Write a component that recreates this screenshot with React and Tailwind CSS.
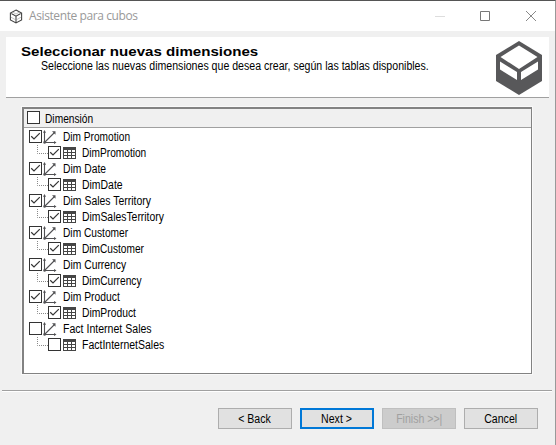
import React from "react";

const dimensions = [
  { name: "Dim Promotion", fit: "scale-x-[0.845]", table: "DimPromotion", tableFit: "scale-x-[0.845]", checked: true },
  { name: "Dim Date", fit: "scale-x-[0.86]", table: "DimDate", tableFit: "scale-x-[0.87]", checked: true },
  { name: "Dim Sales Territory", fit: "scale-x-[0.87]", table: "DimSalesTerritory", tableFit: "scale-x-[0.865]", checked: true },
  { name: "Dim Customer", fit: "scale-x-[0.85]", table: "DimCustomer", tableFit: "scale-x-[0.845]", checked: true },
  { name: "Dim Currency", fit: "scale-x-[0.86]", table: "DimCurrency", tableFit: "scale-x-[0.85]", checked: true },
  { name: "Dim Product", fit: "scale-x-[0.86]", table: "DimProduct", tableFit: "scale-x-[0.86]", checked: true },
  { name: "Fact Internet Sales", fit: "scale-x-[0.88]", table: "FactInternetSales", tableFit: "scale-x-[0.875]", checked: false },
];

function CheckBox({ checked }) {
  return (
    <svg className="mb-px block h-[13px] w-[13px] shrink-0" viewBox="0 0 13 13">
      <rect x="0.5" y="0.5" width="12" height="12" fill="#fff" stroke="#333" />
      {checked && <path d="M2.2 6.3 5 9 10.8 3.2" fill="none" stroke="#333" strokeWidth="1.2" />}
    </svg>
  );
}

function AxisIcon() {
  return (
    <svg className="ml-px block h-[14px] w-[14px] shrink-0" viewBox="0 0 14 14" fill="none" stroke="#505053">
      <path d="M1.5 2v10.5H12M2 12 11.5 2.5" strokeWidth="1.1" />
      <path d="M0 2.8 1.5 0 3 2.8ZM9 1.2h3.5v3.5ZM11 11l2.5 1.5L11 14Z" fill="#505053" stroke="none" />
      <circle cx="1.6" cy="12.4" r="1.3" fill="#505053" stroke="none" />
    </svg>
  );
}

function TableIcon() {
  return (
    <svg className="ml-[2px] block h-[12px] w-[13px] shrink-0" viewBox="0 0 13 12">
      <path d="M0 0h13v12H0Z" fill="#454545" />
      <path d="M1 3h3v2H1Zm4 0h3v2H5Zm4 0h3v2H9ZM1 6h3v2H1Zm4 0h3v2H5Zm4 0h3v2H9ZM1 9h3v2H1Zm4 0h3v2H5Zm4 0h3v2H9Z" fill="#fff" />
    </svg>
  );
}

function Button({ children, look = "border border-[#adadad] bg-[#e1e1e1] text-black" }) {
  return (
    <button className={`flex h-[21px] w-[74px] items-center justify-center text-[12px] ${look}`}>
      <span className="inline-block scale-x-[0.88] whitespace-nowrap">{children}</span>
    </button>
  );
}

export default function App() {
  return (
    <div className="flex h-[445px] w-[556px] flex-col overflow-hidden border-t border-r border-t-[#555] border-r-[#999] bg-[#f0f0f0] font-['Liberation_Sans',sans-serif] text-[12px] text-black">
      <header className="flex h-[30px] shrink-0 items-center bg-white">
        <svg className="ml-[9px] h-[15px] w-[14px]" viewBox="0 0 14 15" fill="none" stroke="#444" strokeWidth="1.1">
          <path d="M7 1 12.6 4v7L7 14 1.4 11V4ZM1.4 4 7 7.2 12.6 4M7 7.2V14" />
          <path d="m3.5 3 3.5 2 3.5-2M1.6 8 7 11l5.4-3" strokeWidth=".5" stroke="#888" />
        </svg>
        <h1 className="ml-[6px] font-['Open_Sans',sans-serif] text-[12px] tracking-[-0.4px] text-[#999]">Asistente para cubos</h1>
        <svg className="ml-auto mr-[17px] h-[12px] w-[103px]" viewBox="0 0 103 12" fill="none">
          <path d="M0 6.5h10" stroke="#ddd" />
          <path d="M45.500 1.500h9v9h-9Z" stroke="#777" />
          <path d="m91 1 10 10M101 1 91 11" stroke="#888" />
        </svg>
      </header>

      <section className="mx-[6px] mt-[6px] flex h-[61px] shrink-0 border-b border-[#a0a0a0] bg-white">
        <div className="w-[460px] pl-[15px] pt-[7px]">
          <h2 className="h-[15px] origin-left scale-x-[1.16] whitespace-nowrap text-[13px] leading-[16px] font-bold">Seleccionar nuevas dimensiones</h2>
          <p className="ml-[20px] origin-left scale-x-[0.882] whitespace-nowrap text-[12px] leading-[14px]">Seleccione las nuevas dimensiones que desea crear, según las tablas disponibles.</p>
        </div>
        <svg className="ml-auto mr-[7px] mt-[4px] h-[54px] w-[46px] shrink-0" viewBox="0 0 46 54">
          <path d="M23 0 46 14v26L23 54 0 40V14Z" fill="#58585a" />
          <path d="M23 4.500 41.500 16 23 28 4.500 16ZM4 20.500 21 31v8L4 28.500ZM42 20.500v8L25 39v-8Z" fill="#fff" />
        </svg>
      </section>

      <main className="ml-[22px] mt-[9px] flex h-[267px] w-[510px] shrink-0 flex-col border-2 border-[#828282] border-b border-r bg-white outline-1 outline-white/60">
        <div className="flex h-[19px] shrink-0 items-center gap-[5px] border-b border-[#a0a0a0] bg-[#f0f0f0] pl-[3px]">
          <CheckBox />
          <span className="inline-block origin-left scale-x-[0.85] pt-[2px]">Dimensión</span>
        </div>
        <div className="pt-px">
          {dimensions.map(({ name, fit, table, tableFit, checked }) => (
            <div key={name}>
              <div className="flex h-[16px] items-center pl-[5px]">
                <CheckBox checked={checked} />
                <AxisIcon />
                <span className={`ml-[6px] inline-block origin-left whitespace-nowrap ${fit}`}>{name}</span>
              </div>
              <div className="flex h-[16px] items-center pl-[13px]">
                <svg className="h-[16px] w-[11px] shrink-0" viewBox="0 0 11 16">
                  <path d="M.5 0v8.500H11" fill="none" stroke="#888" strokeDasharray="1 1" />
                </svg>
                <CheckBox checked={checked} />
                <TableIcon />
                <span className={`ml-[6px] inline-block origin-left whitespace-nowrap ${tableFit}`}>{table}</span>
              </div>
            </div>
          ))}
        </div>
      </main>

      <div className="ml-[2px] mr-[3px] mt-[16px] h-[2px] shrink-0 border-t border-[#a0a0a0] bg-white" />
      <footer className="mr-[17px] mt-[16px] flex justify-end gap-[8px]">
        <Button>&lt; Back</Button>
        <Button look="border-2 border-[#0078d7] bg-[#e1e1e1] text-black">Next &gt;</Button>
        <Button look="border border-[#bfbfbf] bg-[#cccccc] text-[#a0a0a0]">Finish &gt;&gt;|</Button>
        <Button>Cancel</Button>
      </footer>
    </div>
  );
}
